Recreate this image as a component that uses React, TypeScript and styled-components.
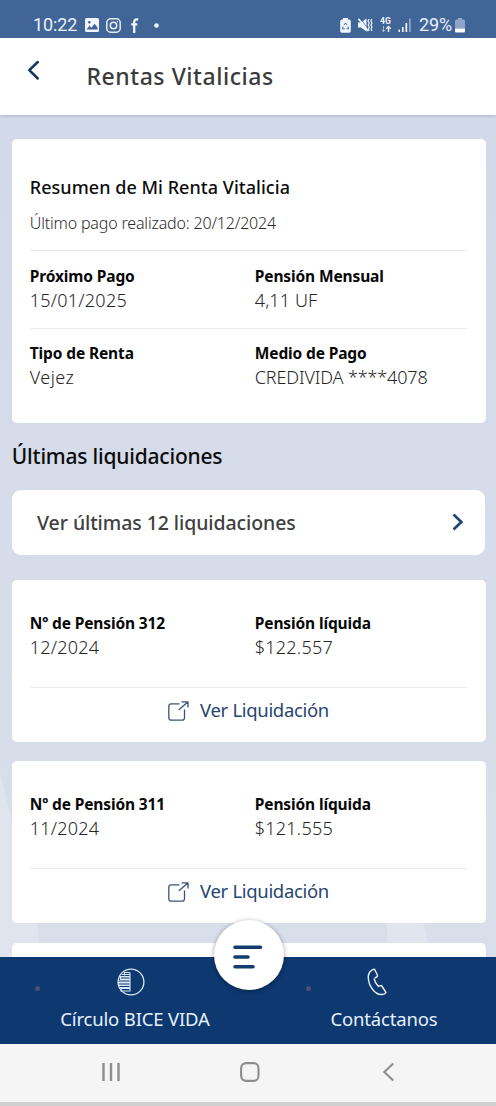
import React from 'react';
import styled, { createGlobalStyle } from 'styled-components';

const GlobalStyle = createGlobalStyle`
  * { box-sizing: border-box; }
  body { margin: 0; background: #d5dbe8; }
`;

const Screen = styled.div`
  position: relative;
  display: flex;
  flex-direction: column;
  width: 496px;
  height: 1106px;
  overflow: hidden;
  background: #d5dbe8;
  font-family: 'Noto Sans', 'Open Sans', sans-serif;
  color: #0c0c0c;
`;

const StatusBar = styled.div`
  flex: none;
  height: 37.6px;
  padding: 12px 31.5px 0 33px;
  display: flex;
  justify-content: space-between;
  background: #426598;
  color: #e9f1fb;
  font: 400 18px/26px Roboto, sans-serif;
`;

const StatusGroup = styled.div`
  display: flex;
  align-items: center;
  height: 26px;
`;

const StatusText = styled.span<{ $spacing?: number; $gap?: number }>`
  margin-left: ${p => p.$gap ?? 0}px;
  letter-spacing: ${p => p.$spacing ?? 0}px;
  white-space: nowrap;
`;

const StatusIcon = styled.svg<{ $gap: number }>`
  flex: none;
  display: block;
  margin-left: ${p => p.$gap}px;
`;

const Header = styled.header`
  flex: none;
  position: relative;
  z-index: 1;
  height: 77.4px;
  padding-left: 26px;
  display: flex;
  align-items: flex-start;
  background: #fff;
  box-shadow: 0 1px 3px rgba(80, 100, 140, 0.3);
`;

const BackButton = styled.button`
  margin: 21px 0 0;
  padding: 0;
  border: 0;
  width: 60.5px;
  height: 22px;
  background: none;
  svg { display: block; }
`;

const Title = styled.h1`
  margin: 22.4px 0 0;
  font-size: 23px;
  font-weight: 530;
  line-height: 32px;
  letter-spacing: 0.55px;
  color: #3b3b3b;
`;

const Content = styled.main`
  flex: 1;
  position: relative;
  min-height: 0;
  overflow: hidden;
  padding: 24.4px 10.3px 0 11.8px;
  display: flex;
  flex-direction: column;
  background: linear-gradient(#d2d9e8, #d6dce9 50%, #d8dfea);
`;

const Backdrop = styled.svg`
  position: absolute;
  left: 0;
  bottom: 0;
`;

const Card = styled.section<{ $height: number; $top: number; $gap: number }>`
  position: relative;
  flex: none;
  height: ${p => p.$height}px;
  padding: ${p => p.$top}px 18.5px 0 18px;
  margin-bottom: ${p => p.$gap}px;
  border-radius: 5px;
  background: #fff;
`;

const CardTitle = styled.h2`
  margin: 0 0 13px;
  font-size: 18px;
  font-weight: 530;
  line-height: 24px;
  letter-spacing: 0.04px;
`;

const Subtitle = styled.p`
  margin: 0;
  font-size: 16px;
  font-weight: 330;
  line-height: 22px;
  letter-spacing: -0.17px;
  color: #2b2b2b;
`;

const Divider = styled.hr<{ $top: number; $bottom: number }>`
  height: 1px;
  border: 0;
  margin: ${p => p.$top}px 0 ${p => p.$bottom}px;
  background: #ebebeb;
`;

const Columns = styled.div`
  display: grid;
  grid-template-columns: 225px 1fr;
`;

const Label = styled.div`
  font-size: 15.5px;
  font-weight: 700;
  line-height: 20px;
  letter-spacing: -0.13px;
  white-space: nowrap;
  color: #080808;
`;

const Value = styled.div<{ $spacing?: number }>`
  margin-top: 2px;
  font-size: 18px;
  font-weight: 330;
  line-height: 24px;
  letter-spacing: ${p => p.$spacing ?? 0.24}px;
  white-space: nowrap;
  color: #262626;
`;

const SectionTitle = styled.h2`
  flex: none;
  position: relative;
  margin: 19px 0 20px 0;
  font-size: 21px;
  font-weight: 500;
  line-height: 28px;
  letter-spacing: -0.21px;
`;

const LinkRow = styled.a`
  flex: none;
  position: relative;
  height: 65px;
  margin: 0 0.7px 25px 0;
  padding: 0 22px 0 25.3px;
  display: flex;
  align-items: center;
  justify-content: space-between;
  border-radius: 9px;
  background: #fff;
  color: #404040;
  font-size: 19.5px;
  font-weight: 500;
  letter-spacing: -0.08px;
`;

const OpenLink = styled.a`
  display: flex;
  justify-content: center;
  gap: 11px;
  font-size: 18.5px;
  line-height: 24px;
  letter-spacing: -0.32px;
  color: #26466f;
  svg { display: block; margin-top: 3px; }
`;

const BottomNav = styled.nav`
  flex: none;
  position: relative;
  height: 86.8px;
  display: flex;
  background: #0d3870;
  color: #e6f0fc;
`;

const NavItem = styled.a<{ $width: number; $inset: number; $iconShift: number }>`
  width: ${p => p.$width}px;
  padding: 11px 0 0 ${p => p.$inset}px;
  display: flex;
  flex-direction: column;
  align-items: center;
  font-size: 18.5px;
  line-height: 26px;
  letter-spacing: -0.17px;
  svg { display: block; margin: 0 ${p => p.$iconShift}px 10px 0; }
`;

const NavDot = styled.i<{ $x: number }>`
  position: absolute;
  left: ${p => p.$x}px;
  top: 29.5px;
  width: 5px;
  height: 5px;
  border-radius: 50%;
  background: #485173;
`;

const MenuButton = styled.button`
  position: absolute;
  left: 214px;
  top: -37px;
  width: 70px;
  height: 70px;
  padding: 0;
  border: 0;
  border-radius: 50%;
  background: #fff;
  box-shadow: 0 1px 5px rgba(0, 0, 0, 0.38);
  svg { display: block; }
`;

const SystemBar = styled.div`
  flex: none;
  height: 62.4px;
  display: flex;
  align-items: flex-start;
  justify-content: space-between;
  padding: 18px 101px 0 100.5px;
  border-bottom: 4.4px solid #d0d0d0;
  background: #f5f5f5;
`;

const OpenIcon = () => (
  <svg width="21" height="20" viewBox="0 0 21 20" fill="none" stroke="#3b5577" strokeWidth="1.3" strokeLinecap="round" strokeLinejoin="round">
    <path d="M11 2.8H3A2.2 2.2 0 0 0 .8 5V17A2.2 2.2 0 0 0 3 19.2H14.3A2.2 2.2 0 0 0 16.5 17V9" />
    <path d="M11.2 8.5 19.8 1M14 .9H20V6" />
  </svg>
);

const statements = [
  { number: 312, period: '12/2024', amount: '$122.557' },
  { number: 311, period: '11/2024', amount: '$121.555' },
];

export default function App() {
  return (
    <Screen>
      <GlobalStyle />
      <StatusBar>
        <StatusGroup>
          <StatusText $spacing={-0.1}>10:22</StatusText>
          <StatusIcon $gap={7.5} width="14" height="14" viewBox="0 0 14 14">
            <rect width="14" height="14" rx="1.5" fill="#f0f6fd" />
            <path d="M1.5 11.5 4.5 7.8 6.5 9.8 9.5 5.8 12.5 9.5V11.5Z" fill="#426598" />
            <circle cx="4.3" cy="4.3" r="1.3" fill="#426598" />
          </StatusIcon>
          <StatusIcon $gap={7} width="15" height="15" viewBox="0 0 15 15" fill="none" stroke="#e4edf8" strokeWidth="1.5">
            <rect x=".8" y=".8" width="13.4" height="13.4" rx="3.8" />
            <circle cx="7.5" cy="7.5" r="3.2" />
            <circle cx="11.3" cy="3.7" r=".4" strokeWidth=".8" />
          </StatusIcon>
          <StatusIcon $gap={10.5} width="8" height="15" viewBox="0 0 8 15" fill="none" stroke="#f0f6fd" strokeWidth="2.3">
            <path d="M7.2 1.3H5.8Q3.2 1.3 3.2 4V15M.3 6.4H6.3" />
          </StatusIcon>
          <StatusIcon $gap={15} width="5" height="5" viewBox="0 0 5 5">
            <circle cx="2.5" cy="2.5" r="2.3" fill="#f0f6fd" />
          </StatusIcon>
        </StatusGroup>
        <StatusGroup>
          <StatusIcon $gap={0} width="11" height="15" viewBox="0 0 11 15">
            <path d="M3 0H8V1.5H9A1.8 1.8 0 0 1 10.8 3.3V13A1.8 1.8 0 0 1 9 14.8H2A1.8 1.8 0 0 1 .2 13V3.3A1.8 1.8 0 0 1 2 1.5H3Z" fill="#f0f6fd" />
            <path d="M4 7 5.5 5 7 7M8 8.5 8.600 10.800H6.5M4.600 10.800H2.400L3.200 8.500" fill="none" stroke="#426598" strokeWidth="1" />
          </StatusIcon>
          <StatusIcon $gap={7} width="15" height="14" viewBox="0 0 15 14" fill="none" stroke="#f0f6fd">
            <path d="M0 4.5H3L8.5.5V13.5L3 9.5H0Z" fill="#f0f6fd" stroke="none" />
            <path d="M.5.8 10 13" strokeWidth="1.6" />
            <path d="M2.2 .3 8.5 8.5" stroke="#426598" strokeWidth=".7" />
            <path d="M11 1 10 3 11.3 5 10.2 7 11.3 9 10.2 11 11 13M13.8 1 12.8 3 14 5 13 7 14 9 13 11 13.8 13" strokeWidth="1.2" />
          </StatusIcon>
          <StatusIcon $gap={7} width="12" height="16" viewBox="0 0 12 16" fill="none" stroke="#e8f1fb">
            <text x="0" y="7" fill="#f0f6fd" stroke="none" fontFamily="Roboto, sans-serif" fontWeight="700" fontSize="8.5">4G</text>
            <path d="M3.5 9V14.5M1.7 12.8 3.5 14.6 5.3 12.8" strokeWidth="1" opacity=".6" />
            <path d="M8.5 15V10M6.3 11.8 8.5 9.6 10.7 11.8" strokeWidth="1.4" />
          </StatusIcon>
          <StatusIcon $gap={6} width="14" height="14" viewBox="0 0 14 14">
            <path d="M.5 11.5H2V14H.5ZM4 9H5.6V14H4ZM7.5 5H9.2V14H7.5Z" fill="#f0f6fd" />
            <path d="M11 .5H12.8V14H11Z" fill="#8da5c6" />
          </StatusIcon>
          <StatusText $gap={6.5} $spacing={0}>29%</StatusText>
          <StatusIcon $gap={2.2} width="10" height="15" viewBox="0 0 10 15">
            <path d="M3 0H7V1.5H8.5A1.5 1.5 0 0 1 10 3V10.5H0V3A1.5 1.5 0 0 1 1.5 1.5H3Z" fill="#8da5c6" />
            <path d="M0 10.5H10V13A1.5 1.5 0 0 1 8.5 14.5H1.5A1.5 1.5 0 0 1 0 13Z" fill="#fff" />
          </StatusIcon>
        </StatusGroup>
      </StatusBar>

      <Header>
        <BackButton aria-label="Volver">
          <svg width="14" height="22" viewBox="0 0 14 22" fill="none" stroke="#123463" strokeWidth="2.5" strokeLinecap="round" strokeLinejoin="round">
            <path d="M11.8 3 3.3 11.2 11.8 19.5" />
          </svg>
        </BackButton>
        <Title>Rentas Vitalicias</Title>
      </Header>

      <Content>
        <Backdrop width="496" height="210" viewBox="0 0 496 210">
          <path d="M0 25Q12 75 26 130Q38 172 41 210H0Z" fill="#e0e5ed" />
          <path d="M387 165H421Q426 185 430 210H387Z" fill="#e0e5ee" />
        </Backdrop>

        <Card $height={283.6} $top={35.5} $gap={0}>
          <CardTitle>Resumen de Mi Renta Vitalicia</CardTitle>
          <Subtitle>Último pago realizado: 20/12/2024</Subtitle>
          <Divider $top={16} $bottom={14.7} />
          <Columns>
            <div><Label>Próximo Pago</Label><Value>15/01/2025</Value></div>
            <div><Label>Pensión Mensual</Label><Value $spacing={0.1}>4,11 UF</Value></div>
          </Columns>
          <Divider $top={16} $bottom={14.7} />
          <Columns>
            <div><Label>Tipo de Renta</Label><Value $spacing={0.4}>Vejez</Value></div>
            <div><Label>Medio de Pago</Label><Value $spacing={-0.14}>CREDIVIDA ****4078</Value></div>
          </Columns>
        </Card>

        <SectionTitle>Últimas liquidaciones</SectionTitle>

        <LinkRow>
          Ver últimas 12 liquidaciones
          <svg width="11" height="18" viewBox="0 0 11 18" fill="none" stroke="#1d4377" strokeWidth="2.6">
            <path d="M1.500 1.500 9.300 9 1.500 16.500" />
          </svg>
        </LinkRow>

        {statements.map(s => (
          <Card key={s.number} $height={162} $top={32.7} $gap={19.3}>
            <Columns>
              <div><Label>Nº de Pensión {s.number}</Label><Value>{s.period}</Value></div>
              <div><Label>Pensión líquida</Label><Value>{s.amount}</Value></div>
            </Columns>
            <Divider $top={28} $bottom={10.5} />
            <OpenLink><OpenIcon />Ver Liquidación</OpenLink>
          </Card>
        ))}
        <Card $height={162} $top={32} $gap={0} />
      </Content>

      <BottomNav>
        <NavDot $x={35.2} />
        <NavItem $width={214} $inset={56} $iconShift={8}>
          <svg width="28" height="28" viewBox="0 0 28 28" fill="none" stroke="#d8e8f8" strokeWidth="1.3">
            <circle cx="14" cy="14" r="12.9" />
            <path d="M13 4.5H7.5V7.5M13 4.5V8.5H3.5V11.5H13V8.5M13 11.5V14.5H1.5V17.5H13V14.5M13 17.5V20.5H4V23H13V20.5M5 6.5H13M3 10H13M1.5 13H13M1.5 16H13M3 19.5H13" strokeWidth="1.1" />
          </svg>
          Círculo BICE VIDA
        </NavItem>
        <NavDot $x={305.5} />
        <NavItem $width={282} $inset={58} $iconShift={14}>
          <svg width="20" height="28" viewBox="0 0 20 28" fill="none" stroke="#e6f0fc" strokeWidth="1.4" strokeLinejoin="round">
            <path d="M7.5 1Q1.5 2.5 1.2 9Q1.5 17 6.5 22.5Q10.5 27 15 26.5Q18 26.3 19 24.5L14.5 17.5Q12.5 17.7 11.5 18.5Q8 15 7 10.5M7.5 1 10.7 7.7Q10 9 7.8 10.2" />
          </svg>
          Contáctanos
        </NavItem>
        <MenuButton aria-label="Menú">
          <svg width="70" height="70" viewBox="0 0 70 70" fill="none" stroke="#143c70" strokeWidth="3.6" strokeLinecap="round">
            <path d="M21 27.3H46.5M21 37H34M21 46.7H39" />
          </svg>
        </MenuButton>
      </BottomNav>

      <SystemBar>
        <svg width="20" height="20" viewBox="0 0 20 20" stroke="#8e8e8e" strokeWidth="2.4">
          <path d="M2.5 1V19M10 1V19M17.5 1V19" />
        </svg>
        <svg width="21" height="20" viewBox="0 0 21 20" fill="none" stroke="#8e8e8e" strokeWidth="2.1">
          <rect x="1.1" y="1.1" width="17.4" height="17.8" rx="5" />
        </svg>
        <svg width="14" height="20" viewBox="0 0 14 20" fill="none" stroke="#8e8e8e" strokeWidth="2.1">
          <path d="M12.3 1.5 3.3 10 12.3 18.5" />
        </svg>
      </SystemBar>
    </Screen>
  );
}
